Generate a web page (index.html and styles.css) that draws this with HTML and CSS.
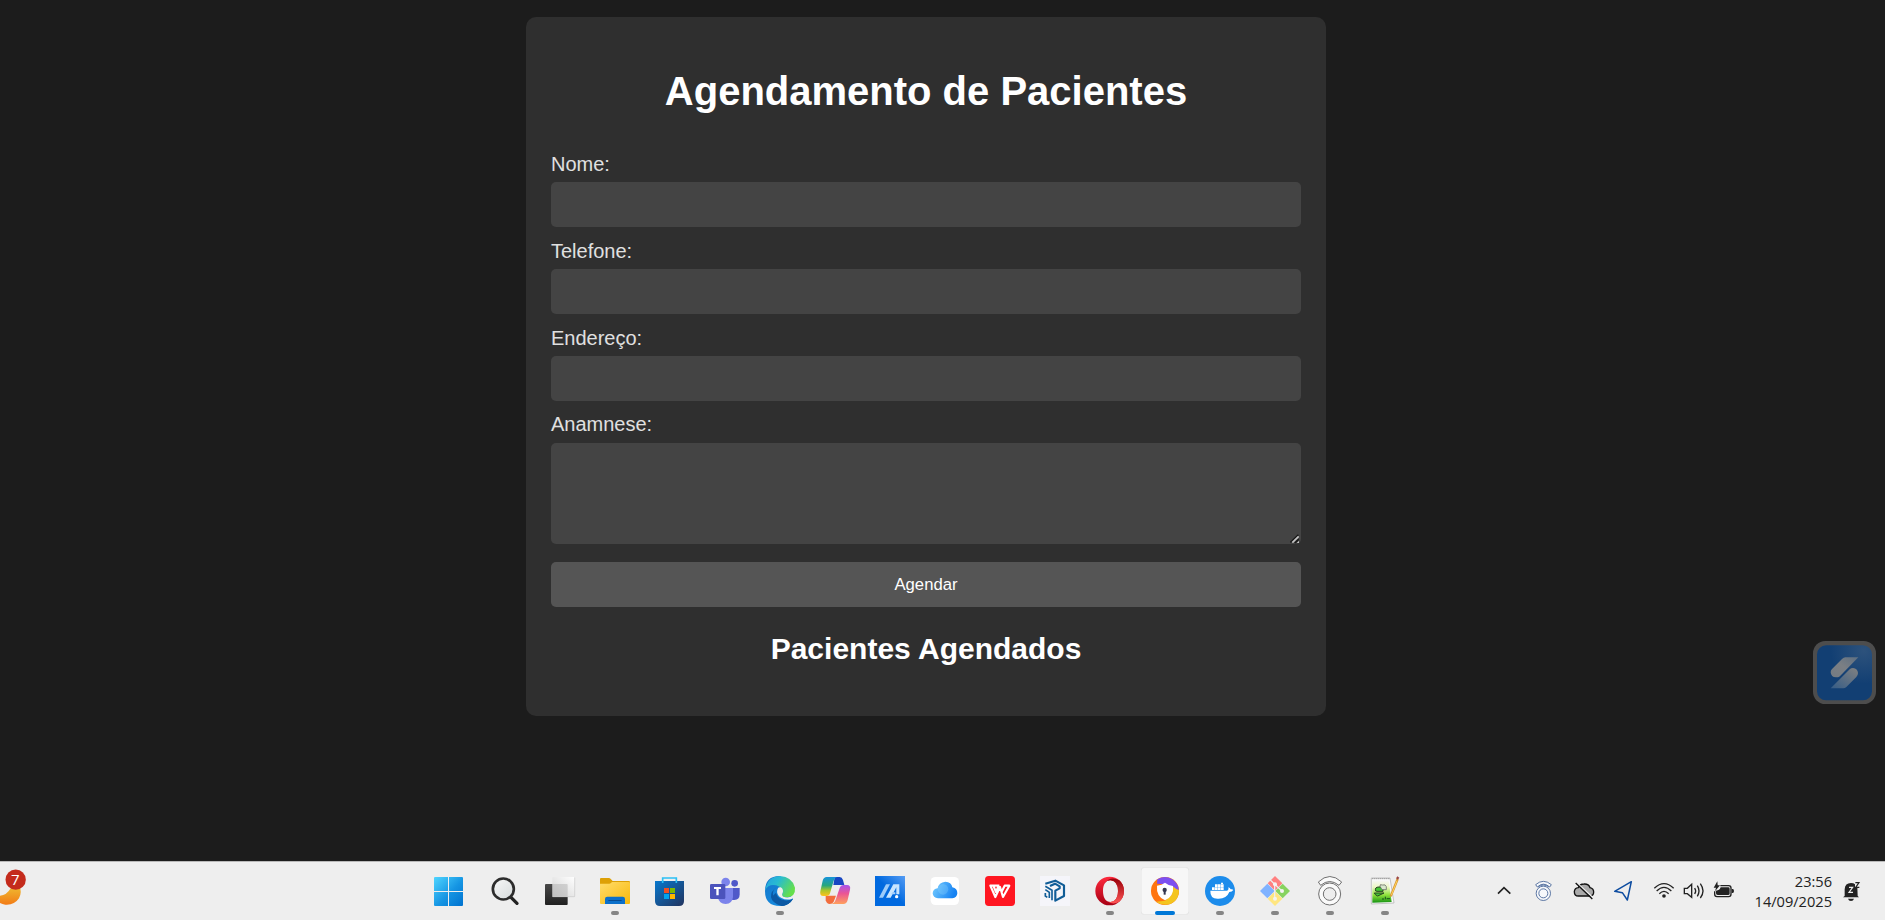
FILE: index.html
```html
<!DOCTYPE html>
<html lang="pt-BR">
<head>
<meta charset="utf-8">
<title>Agendamento de Pacientes</title>
<link rel="stylesheet" href="styles.css">
</head>
<body>
<main class="page">
  <section class="card">
    <h1 class="title">Agendamento de Pacientes</h1>
    <form class="form">
      <label class="label" for="nome">Nome:</label>
      <input class="field" id="nome" type="text">
      <label class="label" for="telefone">Telefone:</label>
      <input class="field" id="telefone" type="text">
      <label class="label" for="endereco">Endereço:</label>
      <input class="field" id="endereco" type="text">
      <label class="label label-area" for="anamnese">Anamnese:</label>
      <div class="area-wrap">
        <textarea class="field area" id="anamnese"></textarea>
        <svg class="grip" viewBox="570 402 33 30"><path d="M571 429L596 404V429Z" fill="#3a3a3a"/><path d="M571 427L595 404M585 429L596 418" stroke="#161616" stroke-width="4"/><path d="M577 428L596 409" stroke="#c4c4c4" stroke-width="5"/><path d="M590 429L597 422V429Z" fill="#c4c4c4"/></svg>
      </div>
      <button class="submit" type="button">Agendar</button>
    </form>
    <h2 class="subtitle">Pacientes Agendados</h2>
  </section>
</main>

<svg class="floating" viewBox="84 62 189 189">
  <defs><radialGradient id="fl" cx=".85" cy=".1" r=".6"><stop stop-color="#2d527c"/><stop offset="1" stop-color="#123f73"/></radialGradient>
  <linearGradient id="fs" x1="1" y1="0" x2="0" y2="1"><stop stop-color="#5d6f82"/><stop offset=".5" stop-color="#7b7f84"/><stop offset="1" stop-color="#747b83"/></linearGradient>
  <linearGradient id="ft" x1="1" y1="0" x2="0" y2="1"><stop stop-color="#818181"/><stop offset="1" stop-color="#355c86"/></linearGradient></defs>
  <rect x="84" y="62" width="189" height="189" rx="37" fill="#4d4d4d"/>
  <rect x="96" y="75" width="165" height="165" rx="27" fill="url(#fl)"/>
  <path d="M220 111H181Q176 111 171 116L141 146Q137 150 137 156Q138 171 153 171H159Q163 170 166 166Z" fill="url(#fs)"/>
  <path d="M137 204H175Q180 204 184 200L214 170Q219 165 219 158Q218 144 204 143Q198 143 194 147Z" fill="url(#ft)"/>
</svg>

<footer class="taskbar">
  <svg class="weather" viewBox="0 51 144 144">
    <defs><linearGradient id="moon" x2="0" y2="1"><stop stop-color="#efbd32"/><stop offset="1" stop-color="#f27b16"/></linearGradient></defs>
    <path d="M0 137Q20 136 32 115L58 108Q67 126 57 145Q43 166 16 164Q7 163 0 159Z" fill="url(#moon)"/>
    <circle cx="47" cy="89" r="30.5" fill="#c42b1c"/>
    <text class="badge-text" x="46" y="105" text-anchor="middle">7</text>
  </svg>
  <nav class="apps">
    <svg class="app" viewBox="18 51 144 144"><defs><linearGradient id="win" gradientUnits="userSpaceOnUse" x1="42" y1="81" x2="129" y2="167"><stop stop-color="#4fd5ff"/><stop offset=".55" stop-color="#1595e3"/><stop offset="1" stop-color="#0072cf"/></linearGradient></defs>
      <path fill="url(#win)" d="M45 81H84V123H42V84Q42 81 45 81ZM87 81H126Q129 81 129 84V123H87ZM42 126H84V168H45Q42 168 42 165ZM87 126H129V165Q129 168 126 168H87Z"/></svg>
    <svg class="app" viewBox="183 51 144 144"><defs><linearGradient id="lens" x2="1" y2="1"><stop stop-color="#f8f8f8"/><stop offset="1" stop-color="#d6dbdc"/></linearGradient></defs>
      <path d="M273 142L291 160" stroke="#222" stroke-width="10" stroke-linecap="round"/><circle cx="250" cy="117" r="31.500" fill="url(#lens)" stroke="#2c2c2c" stroke-width="8"/></svg>
    <svg class="app" viewBox="348 51 144 144"><defs><linearGradient id="tv1" x2="0" y2="1"><stop stop-color="#484848"/><stop offset="1" stop-color="#202020"/></linearGradient><linearGradient id="tv2" x1="1" x2="0" y2="1"><stop stop-color="#fff"/><stop offset="1" stop-color="#d2d2d2"/></linearGradient></defs>
      <rect x="375" y="102" width="68" height="63" rx="3" fill="url(#tv1)"/><rect x="397" y="81" width="68" height="60" rx="2" fill="url(#tv2)"/><path d="M397 102H440Q443 102 443 105V141H397Z" fill="#aaa" opacity=".45"/><path d="M464 82V140H398" fill="none" stroke="#c8c8c8" stroke-width="2"/></svg>
    <svg class="app" viewBox="513 51 144 144"><defs><linearGradient id="fold" x2="1" y2="1"><stop stop-color="#ffdc6b"/><stop offset="1" stop-color="#f9b90b"/></linearGradient></defs>
      <path d="M540 87Q540 84 543 84H566Q570 84 573 88L578 93H627Q630 93 630 97V110H540Z" fill="#dda006"/><path d="M540 101H568Q572 101 576 96H627Q630 96 630 99V159Q630 162 627 162H543Q540 162 540 159Z" fill="url(#fold)"/><path d="M555 162V147Q555 140 562 140H608Q615 140 615 147V162Z" fill="#0c70ca"/><rect x="565" y="150" width="40" height="3" rx="1" fill="#064b91"/><rect class="run" x="573" y="183" width="24" height="12" rx="6"/></svg>
    <svg class="app" viewBox="678 51 144 144"><defs><linearGradient id="store" x2="1" y2="1"><stop stop-color="#0878cd"/><stop offset="1" stop-color="#22335e"/></linearGradient></defs>
      <path d="M705 93H792V153Q792 168 777 168H720Q705 168 705 153Z" fill="url(#store)"/><path d="M728 99V84H769V99" fill="none" stroke="#2bc0f5" stroke-width="5"/><path d="M732 114H747V129H732Z" fill="#f25022"/><path d="M750 114H765V129H750Z" fill="#7fba00"/><path d="M732 132H747V147H732Z" fill="#00a4ef"/><path d="M750 132H765V147H750Z" fill="#ffb900"/></svg>
    <svg class="app" viewBox="33 51 144 144"><circle cx="107" cy="96" r="13" fill="#7b83eb"/><circle cx="134" cy="100" r="10" fill="#5059c9"/><path d="M121 114H149V133Q149 150 133 150Q121 150 121 144Z" fill="#5059c9"/><path d="M84 114H129V141Q127 161 107 162Q87 161 84 143Z" fill="#7b83eb"/><rect x="60" y="102" width="46" height="45" rx="4" fill="#4b53bc"/><path d="M72 111H93V117H86V136H79V117H72Z" fill="#fff"/></svg>
    <svg class="app" viewBox="198 51 144 144"><defs><linearGradient id="eg1" x2="1" y2=".5"><stop stop-color="#249ee3"/><stop offset=".45" stop-color="#28bbd1"/><stop offset="1" stop-color="#65df4c"/></linearGradient><linearGradient id="eg2" x2=".7" y2="1"><stop stop-color="#1474c8"/><stop offset="1" stop-color="#168de1"/></linearGradient></defs>
      <path d="M225 123Q225 78 270 78L290 120L309 147Q297 168 270 168Q225 168 225 123Z" fill="url(#eg2)"/><path d="M227 112Q237 78 270 78Q306 80 315 113Q317 139 292 142Q278 142 276 136Q280 130 277 120Q269 105 249 105Q234 105 225 121Z" fill="url(#eg1)"/><path d="M260 112Q247 119 249 136Q256 157 281 157Q297 157 309 147Q297 165 276 168Q246 160 243 142Q241 124 260 112Z" fill="#0c59a4"/><path d="M258 128Q262 147 285 151Q298 152 309 147Q297 165 276 168Q250 160 248 138Z" fill="#0c59a4"/><path d="M262 119Q264 110 272 112Q282 118 278 129Q274 136 280 140Q292 145 308 139Q311 145 305 147Q289 152 273 143Q258 134 262 119Z" fill="#eee"/><rect class="run" x="258" y="183" width="24" height="12" rx="6"/></svg>
    <svg class="app" viewBox="363 51 144 144"><defs><linearGradient id="cp1" x2="0" y2="1"><stop stop-color="#1692db"/><stop offset=".45" stop-color="#27a77d"/><stop offset=".7" stop-color="#a9c52c"/><stop offset="1" stop-color="#ffc21c"/></linearGradient><linearGradient id="cp2" x2="0" y2="1"><stop stop-color="#a653ed"/><stop offset=".45" stop-color="#eb5594"/><stop offset="1" stop-color="#ffa05d"/></linearGradient></defs>
      <path d="M434 81H449Q456 81 459 90L463 105H430Z" fill="#1746c2"/><path d="M407 137H438L431 155Q428 162 419 162Q410 162 407 151Z" fill="#f26d3d"/><path d="M410 81H441Q434 82 431 92L420 130Q418 138 409 138H400Q388 138 391 124L398 92Q401 81 410 81Z" fill="url(#cp1)"/><path d="M461 105H471Q483 105 480 119L473 150Q470 162 460 162H423Q433 160 437 149L449 114Q452 105 461 105Z" fill="url(#cp2)"/></svg>
    <svg class="app" viewBox="528 51 144 144"><defs><linearGradient id="asus" x1="1" x2=".5" y2=".5"><stop stop-color="#559cf4"/><stop offset="1" stop-color="#0069df"/></linearGradient></defs><rect x="555" y="78" width="90" height="90" fill="url(#asus)"/><path d="M567 143L588 103H600L579 143Z" fill="#9bcbfa"/><path d="M588 143L610 103H628V133H619V112L602 143Z" fill="#c9e5ff"/><path d="M607 127H616V133H603Z" fill="#a8d1fb"/><circle cx="620" cy="140" r="5" fill="#fff"/></svg>
    <svg class="app" viewBox="693 51 144 144"><defs><linearGradient id="cloud" x2="1" y2=".3"><stop stop-color="#78ceff"/><stop offset="1" stop-color="#1783f3"/></linearGradient></defs><rect x="722" y="81" width="85" height="84" rx="14" fill="#fff"/><path d="M744 145Q729 144 728 130Q729 117 743 115Q746 97 766 95Q784 96 787 112Q802 115 802 130Q801 144 787 145Z" fill="url(#cloud)"/><circle cx="759" cy="118" r="16" fill="#a0e0ff" opacity=".25"/></svg>
    <svg class="app" viewBox="48 51 144 144"><rect x="75" y="78" width="90" height="90" rx="11" fill="#ff1621"/><path d="M118 107H91L106 141L120 111L129 141L148 107H134L125 125M101 109L108 126L115 109" fill="none" stroke="#fff" stroke-width="6.500" stroke-linejoin="round"/></svg>
    <svg class="app" viewBox="213 51 144 144"><rect x="240" y="78" width="90" height="90" fill="#f5f5fa"/><g fill="none" stroke="#115d98"><path d="M256 101L286 92L312 106V138L286 152V122L299 115V109L285 101L270 108" stroke-width="6.500" stroke-linejoin="round"/><path d="M256 109L276 121V151M256 119L268 127V144M256 129V138L262 142" stroke-width="5"/></g></svg>
    <svg class="app" viewBox="378 51 144 144"><defs><linearGradient id="op" x2="0" y2="1"><stop stop-color="#ff2a3d"/><stop offset="1" stop-color="#a70014"/></linearGradient><linearGradient id="op2" x2="0" y2="1"><stop stop-color="#970009"/><stop offset="1" stop-color="#ff5555"/></linearGradient></defs><path fill-rule="evenodd" d="M449 80A43 43 0 1 0 449 166A43 43 0 1 0 449 80ZM451 91C467 91 474 105 474 123S467 156 451 156S429 140 429 123S436 91 451 91Z" fill="url(#op)"/><path d="M432 101Q452 76 478 91Q492 103 492 123Q492 143 478 155Q453 169 432 145Q441 156 451 156Q474 153 474 123Q474 94 451 91Q441 91 432 101Z" fill="url(#op2)"/><rect class="run" x="438" y="183" width="24" height="12" rx="6"/></svg>
    <svg class="app" viewBox="543 51 144 144"><rect x="543" y="52" width="144" height="142" rx="11" fill="#f7f7f7" stroke="#dedede" stroke-width="2"/><circle cx="615" cy="123" r="42" fill="#ff7510"/><path d="M592 88Q615 74 637 88Q656 100 657 123L640 126L610 102L591 101Z" fill="#7c4ff0"/><path d="M657 119Q658 149 633 161Q608 169 588 155L615 152L635 135L638 109Q654 122 657 119Z" fill="#f4c51f"/><path d="M591 107Q606 105 615 98Q624 106 639 108Q643 139 615 151Q588 139 591 107Z" fill="#fff"/><circle cx="614" cy="120" r="6.500" fill="#343750"/><path d="M611 120H617V134H611Z" fill="#343750"/><rect x="585" y="183" width="60" height="12" rx="6" fill="#0078d7"/></svg>
    <svg class="app" viewBox="708 51 144 144"><circle cx="780" cy="123" r="45" fill="#1c8ceb"/><path d="M751 122H801Q807 121 805 112Q810 113 812 118Q818 117 820 120Q816 126 808 126Q800 146 776 146Q750 148 751 122ZM756 112H764V120H756ZM765 112H773V120H765ZM774 112H782V120H774ZM783 112H791V120H783ZM765 103H773V111H765ZM774 103H782V111H774ZM783 103H791V111H783ZM783 98H789V102H783Z" fill="#fff"/><rect class="run" x="768" y="183" width="24" height="12" rx="6"/></svg>
    <svg class="app" viewBox="63 51 144 144"><path d="M135 78L157 100L135 122L113 100Z" fill="#ff8080"/><path d="M112 101L134 123L112 145L90 123Z" fill="#80b3ff"/><path d="M158 101L180 123L158 145L136 123Z" fill="#87d35f"/><path d="M135 124L157 146L135 168L113 146Z" fill="#ffe680"/><path d="M118 87L134 103V150M134 103L157 124" fill="none" stroke="#eee" stroke-width="4"/><g fill="#f4f4f4"><circle cx="135" cy="103" r="6"/><circle cx="156" cy="123" r="6"/><circle cx="135" cy="146" r="6"/></g><rect class="run" x="123" y="183" width="24" height="12" rx="6"/></svg>
    <svg class="app" viewBox="228 51 144 144"><g fill="#fafafa" stroke="#707070" stroke-width="3"><path d="M265 96Q299 63 335 96L327 106Q299 83 272 106Z"/><circle cx="299" cy="132" r="33"/><circle cx="299" cy="132" r="19" fill="#eee"/></g><rect class="run" x="288" y="183" width="24" height="12" rx="6"/></svg>
    <svg class="app" viewBox="393 51 144 144"><defs><linearGradient id="npp" x2="0" y2="1"><stop stop-color="#f7f7f7"/><stop offset=".3" stop-color="#edf7c6"/><stop offset=".65" stop-color="#90e33c"/><stop offset="1" stop-color="#169213"/></linearGradient></defs><path d="M424 84H480L492 159L424 162Z" fill="#fafafa" stroke="#aaa" stroke-width="2"/><path d="M427 91H476L485 156L427 158Z" fill="url(#npp)"/><path d="M427 86H479" stroke="#777" stroke-width="3" stroke-dasharray="3 3"/><path d="M437 123Q433 111 447 111H459V124H441ZM433 129H462L443 138Q435 135 433 129Z" fill="#43c834" stroke="#28401f" stroke-width="3"/><path d="M450 109Q449 101 457 105Q467 102 469 110V119H456Z" fill="#d9e8cc" stroke="#555" stroke-width="2"/><path d="M456 147H462M466 140V148M470 146H480" fill="none" stroke="#195218" stroke-width="3"/><path d="M482 139L503 87" stroke="#d89532" stroke-width="7"/><path d="M484 136L501 92" stroke="#ffd45c" stroke-width="3"/><path d="M501 87L505 81" stroke="#9b4744" stroke-width="7"/><rect class="run" x="453" y="183" width="24" height="12" rx="6"/></svg>
  </nav>
  <div class="tray">
    <svg class="w43" viewBox="0 51 129 144"><path d="M54 131L72 113L91 131" fill="none" stroke="#222" stroke-width="5"/></svg>
    <svg class="w40" viewBox="129 51 120 144"><g fill="#f6f8fb" stroke="#405f94" stroke-width="2.500"><path d="M167 104Q190 84 214 104L209 111Q190 94 172 111Z"/><path d="M174 111Q190 99 207 111"/><circle cx="190" cy="130" r="21.500"/><circle cx="190" cy="130" r="13.500"/></g></svg>
    <svg class="w40" viewBox="249 51 120 144"><path d="M295 138Q283 138 283 125Q284 114 295 113Q299 102 312 102Q326 101 330 113Q341 116 341 126Q341 138 329 138Z" fill="#aaa" stroke="#111" stroke-width="4"/><path d="M289 97L341 145" stroke="#eee" stroke-width="4"/><path d="M287 99L337 147" stroke="#111" stroke-width="4"/></svg>
    <svg class="w40" viewBox="369 51 120 144"><path d="M404 124L454 95L442 150L427 128Z" fill="none" stroke="#0d4ca0" stroke-width="4.500" stroke-linejoin="round"/></svg>
    <svg class="w35" viewBox="489 51 105 144"><g fill="none" stroke="#222" stroke-width="4"><path d="M523 115Q552 87 581 115M530 123Q552 101 574 123M538 131Q552 117 566 131"/></g><circle cx="552" cy="138" r="5.500" fill="#222"/></svg>
    <svg class="w31" viewBox="594 51 93 144"><g fill="none" stroke="#222" stroke-width="4"><path d="M613 115H622L635 103V142L622 131H613ZM644 114Q650 123 644 132M652 107Q662 123 652 139M661 101Q677 123 661 144"/></g></svg>
    <svg class="w35" viewBox="687 51 105 144"><path d="M721 107H746Q753 107 753 114V132Q753 140 746 140H711Q704 140 704 132V124" fill="none" stroke="#222" stroke-width="4"/><path d="M722 112H745Q749 112 749 116V131Q749 135 744 135H713Q708 135 708 130V122Q719 122 722 112ZM755 117H758Q762 117 762 123Q762 129 758 129H755ZM712 94L701 113H708L705 124L720 106H713Z" fill="#222"/></svg>
    <div class="clock"><span>23:56</span><span>14/09/2025</span></div>
    <svg class="w53" viewBox="1056 51 159 144"><path d="M1094 138V118Q1095 99 1113 99Q1121 99 1125 103V112H1132L1133 138L1137 142H1089ZM1104 146H1122Q1120 153 1113 153Q1106 153 1104 146Z" fill="#222"/><path d="M1107 112H1118L1107 127H1119" fill="none" stroke="#eee" stroke-width="3.500"/><path d="M1126 98H1137L1127 112H1138" fill="none" stroke="#222" stroke-width="3.500"/></svg>
  </div>
</footer>
</body>
</html>
```
FILE: styles.css
```css
* { box-sizing: border-box; }
body {
  margin: 0;
  height: 920px;
  overflow: hidden;
  display: flex;
  flex-direction: column;
  background: #1c1c1c;
  color: #e0e0e0;
  font-family: Arial, "Liberation Sans", sans-serif;
  font-size: 20px;
}
.page { flex: 1; padding: 17px 0 0 526px; }
.card { width: 800px; height: 699px; padding: 51px 25px 0; border-radius: 10px; background: #2f2f2f; }
.title { margin: 0 0 39px; color: #fff; font-size: 40px; line-height: 46px; text-align: center; }
.form { display: flex; flex-direction: column; }
.label { line-height: 23px; margin-bottom: 6px; }
.field {
  height: 45px;
  margin: 0 0 13px;
  padding: 12px;
  border: 0;
  border-radius: 5px;
  background: #444;
  color: #fff;
}
.label-area { margin-top: -1px; margin-bottom: 7px; }
.area-wrap { position: relative; height: 101px; margin-bottom: 18px; }
.area { display: block; width: 100%; height: 101px; resize: none; }
.grip { position: absolute; right: 0; bottom: 0; width: 11px; height: 10px; }
.submit {
  height: 45px;
  padding: 0;
  border: 0;
  border-radius: 5px;
  background: #555;
  color: #fff;
  font-family: inherit;
  font-size: 16.667px;
}
.subtitle { margin: 25px 0 0; color: #fff; font-size: 30px; line-height: 34px; text-align: center; }
.floating { position: absolute; right: 9px; top: 641px; width: 63px; height: 63px; }
.taskbar {
  display: flex;
  height: 59px;
  padding-top: 5px;
  border-top: 1px solid #b9b9b9;
  background: #eee;
}
.taskbar svg { display: block; flex: none; height: 48px; }
.taskbar .weather { width: 48px; margin-right: 377.5px; }
.badge-text { fill: #fff; font-family: "Open Sans", sans-serif; font-size: 45px; }
.apps { display: flex; gap: 7px; }
.app { width: 48px; }
.run { fill: #858585; }
.tray { display: flex; margin-left: auto; }
.w31 { width: 31px; }
.w35 { width: 35px; }
.w40 { width: 40px; }
.w43 { width: 43px; }
.w53 { width: 53px; }
.clock {
  display: flex;
  flex-direction: column;
  width: 88px;
  padding-top: 4px;
  color: #222;
  font-family: "Open Sans", sans-serif;
  font-size: 14.6px;
  line-height: 20px;
  text-align: right;
}
```
